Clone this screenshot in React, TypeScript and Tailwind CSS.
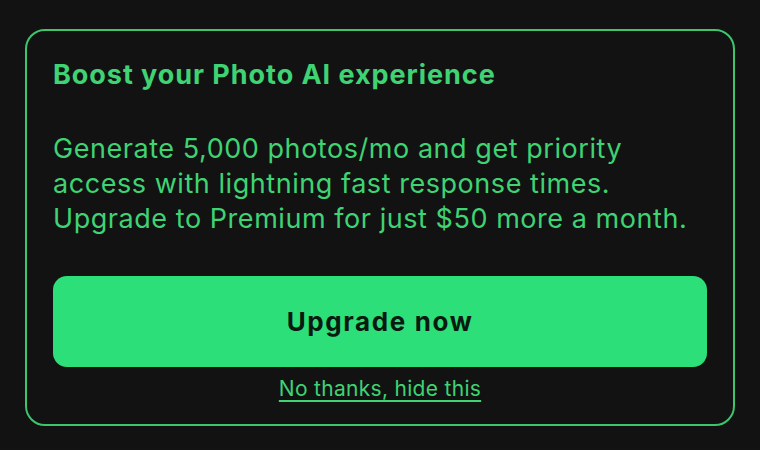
export default function App() {
  return (
    <div className="w-[760px] h-[450px] bg-[#121212] pt-[29px] pl-[25px] pr-[25px] font-['Inter',sans-serif]">
      <div className="h-[397px] rounded-[20px] border-2 border-[#3cc56c] px-[26px] pt-[28px]">
        <h2 className="text-[27px] leading-[32px] font-bold text-[#3fd373] tracking-[0.95px]">
          Boost your Photo AI experience
        </h2>
        <p className="mt-[40px] text-[27px] leading-[35px] text-[#3fd373] tracking-[0.55px]">
          Generate 5,000 photos/mo and get priority
          <br />
          access with lightning fast response times.
          <br />
          Upgrade to Premium for just $50 more a month.
        </p>
        <button className="mt-[40px] block w-full h-[91px] rounded-[14px] bg-[#2ddf78] text-[26px] font-bold text-[#0b1a10] tracking-[1.6px]">
          Upgrade now
        </button>
        <div className="mt-[8px] text-center leading-[28px]">
          <a className="text-[21px] leading-[28px] text-[#3fd373] underline underline-offset-[4px] tracking-[0.3px]">
            No thanks, hide this
          </a>
        </div>
      </div>
    </div>
  )
}
